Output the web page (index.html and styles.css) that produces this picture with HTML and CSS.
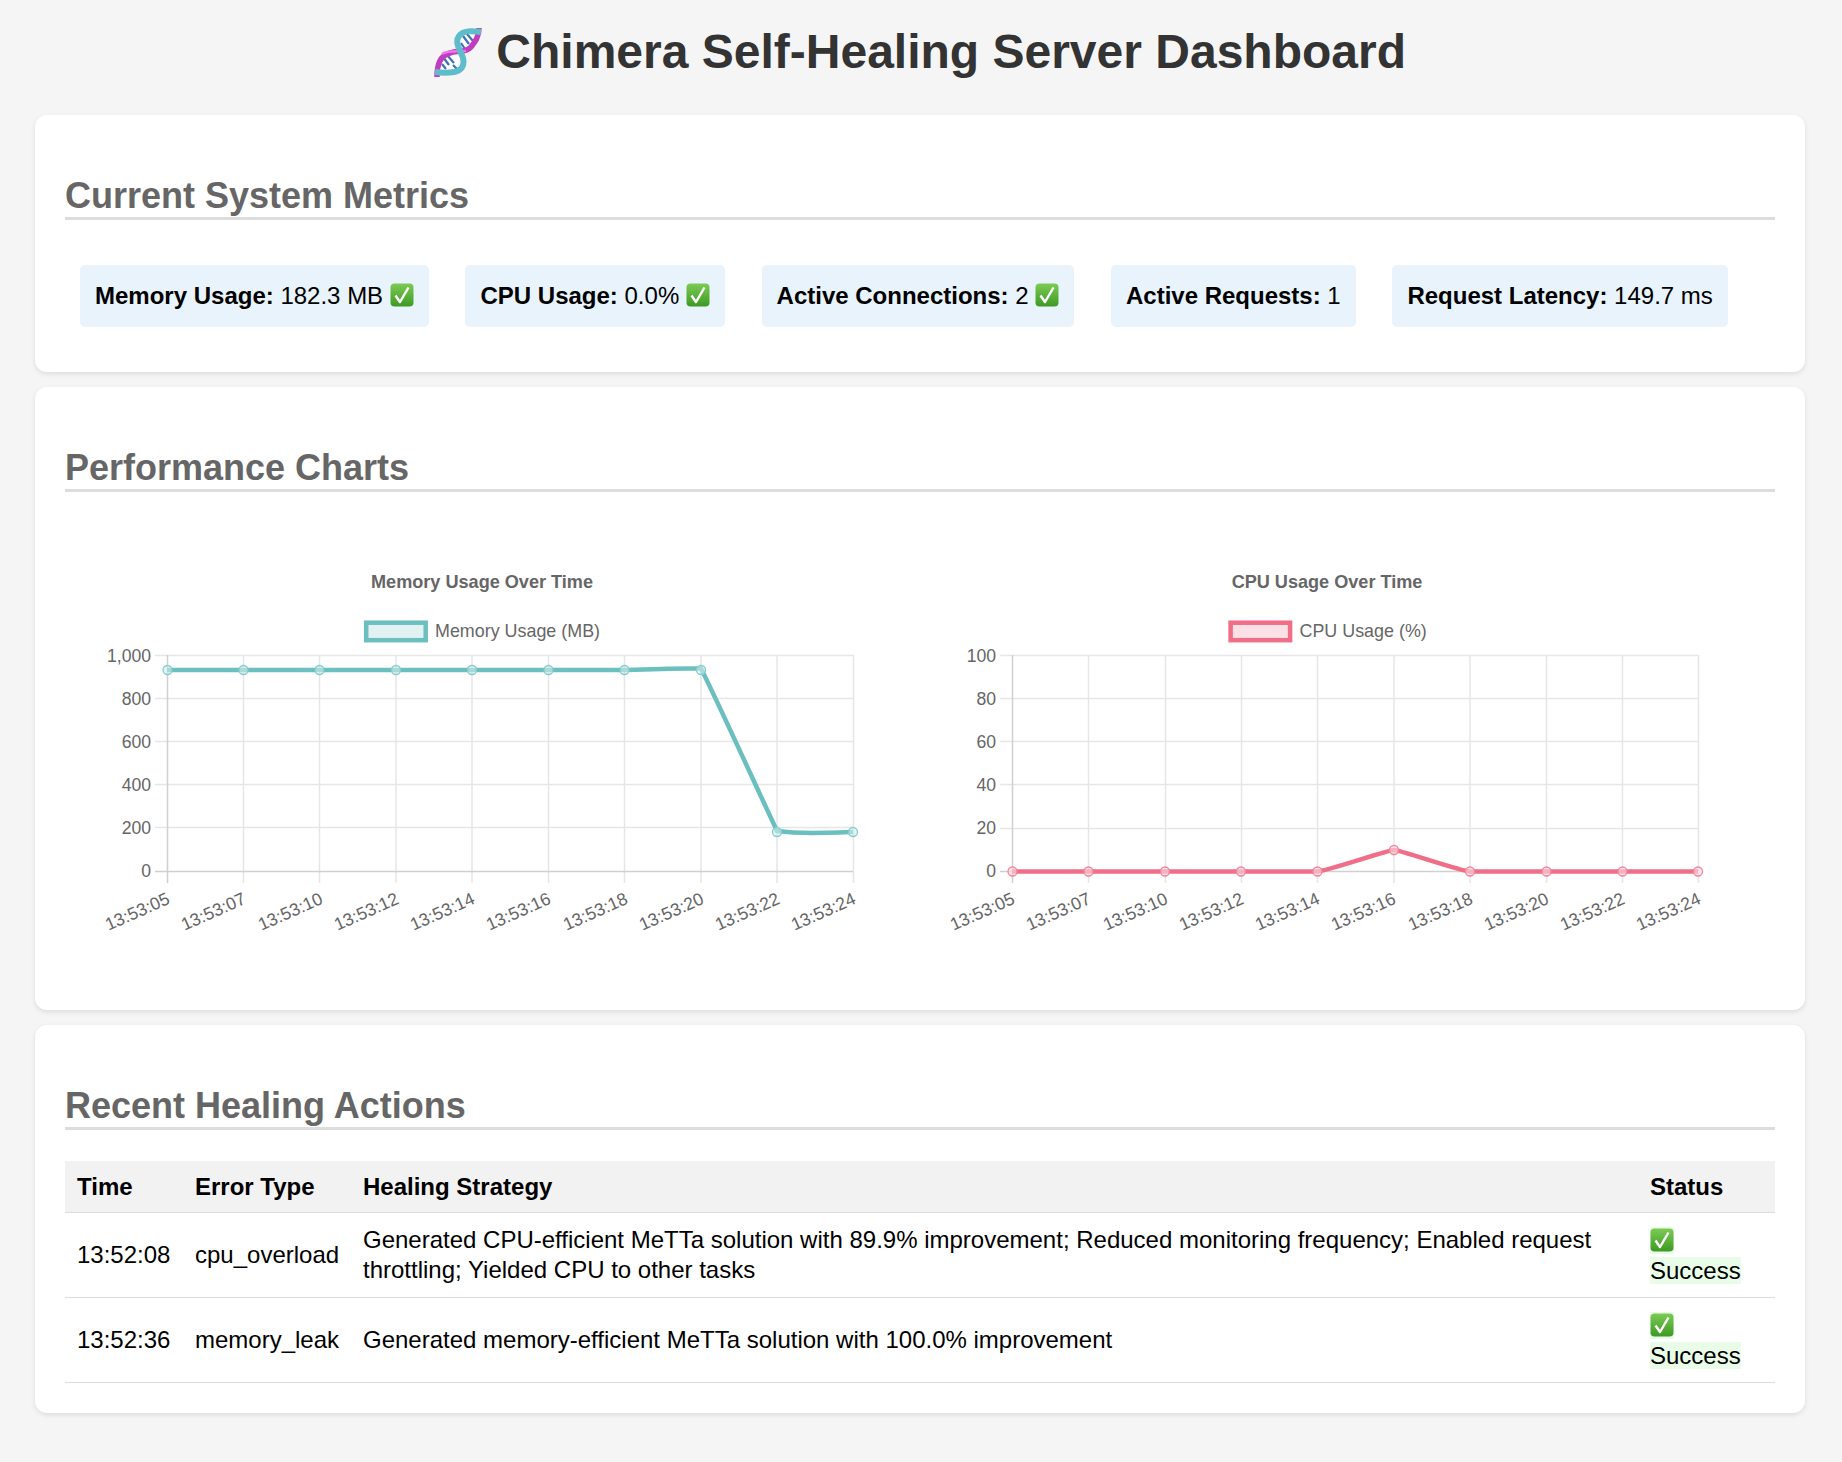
FILE: index.html
```html
<!DOCTYPE html>
<html lang="en">
<head>
    <meta charset="UTF-8">
    <meta name="viewport" content="width=device-width, initial-scale=1.0">
    <title>Chimera Self-Healing Server Dashboard</title>
    <link rel="stylesheet" href="styles.css">
</head>
<body>
    <svg class="defs" width="0" height="0" aria-hidden="true">
        <defs>
            <linearGradient id="checkFill" x1="0" y1="0" x2="0" y2="1">
                <stop offset="0" stop-color="#7ccb55"/>
                <stop offset="1" stop-color="#3d9a23"/>
            </linearGradient>
            <symbol id="check" viewBox="0 0 24 24">
                <rect x="0.5" y="0.5" width="23" height="23" rx="4" fill="url(#checkFill)"/>
                <path d="M5.5 12.5 L10 19 L18.5 4.5" fill="none" stroke="#fff" stroke-width="2.4" stroke-linejoin="round"/>
            </symbol>
        </defs>
    </svg>

    <h1 class="page-title">
        <svg class="dna" viewBox="0 0 48 50" width="48" height="50" aria-hidden="true">
            <!-- white inside of the two lobes, then rungs, then strands -->
            <path d="M26 6 H40 L33 22 H26 Z M6 28 H26 L22 43 H6 Z" fill="#fff"/>
            <path d="M29 8 L35 16 M33 6 L39 13 M27 15 L31 21 M9 29 L15 37 M13 27 L20 35 M8 36 L12 41 M19 37 L23 41" stroke="#3f6fb5" stroke-width="2.2" fill="none"/>
            <path d="M45 0 C45 9 41 14 37 19 C32 25 24 22 16 25 C6 28 3 36 3 49" fill="none" stroke="#c03cc0" stroke-width="5.5"/>
            <path d="M8 26 C14 22 24 24 32 23" fill="none" stroke="#ea78e6" stroke-width="2.5"/>
            <path d="M47 4 C38 3 29 2 25 8 C20 15 27 23 29 30 C31 38 27 43 20 44 C14 45 8 45 1 44" fill="none" stroke="#5fbccb" stroke-width="6"/>
        </svg>
        Chimera Self-Healing Server Dashboard
    </h1>

    <section class="card">
        <h2 class="card-title">Current System Metrics</h2>
        <div class="metrics">
            <div class="metric"><strong>Memory Usage:</strong> 182.3 MB <svg class="check"><use href="#check"/></svg></div>
            <div class="metric"><strong>CPU Usage:</strong> 0.0% <svg class="check"><use href="#check"/></svg></div>
            <div class="metric"><strong>Active Connections:</strong> 2 <svg class="check"><use href="#check"/></svg></div>
            <div class="metric"><strong>Active Requests:</strong> 1</div>
            <div class="metric"><strong>Request Latency:</strong> 149.7 ms</div>
        </div>
    </section>

    <section class="card">
        <h2 class="card-title">Performance Charts</h2>
        <div class="charts">
            <!-- memory chart: plot area is x 102-788, y 115-331 -->
            <svg class="chart" viewBox="0 0 834 440" width="834" height="440">
                <text class="chart-title" x="417" y="48">Memory Usage Over Time</text>
                <rect class="legend-box teal" x="301.2" y="82.7" width="59.5" height="17.5"/>
                <text class="legend-label" x="370" y="97">Memory Usage (MB)</text>

                <g class="grid">
                    <path d="M90 115.5H788 M90 158.5H788 M90 201.5H788 M90 244.5H788 M90 287.5H788"/>
                    <path d="M178.5 115V343 M254.5 115V343 M331 115V343 M407 115V343 M483.5 115V343 M559.5 115V343 M636 115V343 M712 115V343 M788.5 115V343"/>
                </g>
                <path class="axis" d="M102.5 115V343 M90 331.5H788"/>

                <g class="tick-y">
                    <text x="86" y="122">1,000</text>
                    <text x="86" y="165">800</text>
                    <text x="86" y="208">600</text>
                    <text x="86" y="251">400</text>
                    <text x="86" y="294">200</text>
                    <text x="86" y="337">0</text>
                </g>
                <g class="tick-x">
                    <text transform="translate(106 363) rotate(-24)">13:53:05</text>
                    <text transform="translate(182 363) rotate(-24)">13:53:07</text>
                    <text transform="translate(259 363) rotate(-24)">13:53:10</text>
                    <text transform="translate(335 363) rotate(-24)">13:53:12</text>
                    <text transform="translate(411 363) rotate(-24)">13:53:14</text>
                    <text transform="translate(487 363) rotate(-24)">13:53:16</text>
                    <text transform="translate(564 363) rotate(-24)">13:53:18</text>
                    <text transform="translate(640 363) rotate(-24)">13:53:20</text>
                    <text transform="translate(716 363) rotate(-24)">13:53:22</text>
                    <text transform="translate(792 363) rotate(-24)">13:53:24</text>
                </g>

                <path class="line teal" d="M102 130 H559.5 C585 129 610 128 636 128.5 C652 160 695 255 712 291 C735 294 760 293 788 292"/>
                <g class="point teal">
                    <circle cx="102.5" cy="130" r="4.5"/><circle cx="178.5" cy="130" r="4.5"/>
                    <circle cx="254.5" cy="130" r="4.5"/><circle cx="331" cy="130" r="4.5"/>
                    <circle cx="407" cy="130" r="4.5"/><circle cx="483.5" cy="130" r="4.5"/>
                    <circle cx="559.5" cy="130" r="4.5"/><circle cx="636" cy="130" r="4.5"/>
                    <circle cx="712" cy="292" r="4.5"/><circle cx="788" cy="292" r="4.5"/>
                </g>
            </svg>

            <!-- cpu chart: plot area is x 102-788, y 115-331 -->
            <svg class="chart" viewBox="0 0 834 440" width="834" height="440">
                <text class="chart-title" x="417" y="48">CPU Usage Over Time</text>
                <rect class="legend-box pink" x="320.6" y="82.7" width="59.5" height="17.5"/>
                <text class="legend-label" x="389.5" y="97">CPU Usage (%)</text>

                <g class="grid">
                    <path d="M90 115.5H788 M90 158.5H788 M90 201.5H788 M90 244.5H788 M90 288.5H788"/>
                    <path d="M178.5 115V343 M255.5 115V343 M331.5 115V343 M407.5 115V343 M484 115V343 M560 115V343 M636.5 115V343 M712.5 115V343 M788.5 115V343"/>
                </g>
                <path class="axis" d="M102.5 115V343 M90 331.5H788"/>

                <g class="tick-y">
                    <text x="86" y="122">100</text>
                    <text x="86" y="165">80</text>
                    <text x="86" y="208">60</text>
                    <text x="86" y="251">40</text>
                    <text x="86" y="294">20</text>
                    <text x="86" y="337">0</text>
                </g>
                <g class="tick-x">
                    <text transform="translate(106 363) rotate(-24)">13:53:05</text>
                    <text transform="translate(182 363) rotate(-24)">13:53:07</text>
                    <text transform="translate(259 363) rotate(-24)">13:53:10</text>
                    <text transform="translate(335 363) rotate(-24)">13:53:12</text>
                    <text transform="translate(411 363) rotate(-24)">13:53:14</text>
                    <text transform="translate(487 363) rotate(-24)">13:53:16</text>
                    <text transform="translate(564 363) rotate(-24)">13:53:18</text>
                    <text transform="translate(640 363) rotate(-24)">13:53:20</text>
                    <text transform="translate(716 363) rotate(-24)">13:53:22</text>
                    <text transform="translate(792 363) rotate(-24)">13:53:24</text>
                </g>

                <path class="line pink" d="M102 331.5 H407.5 C415 331.5 478 310 484 310 C490 310 552 331.5 560 331.5 H788"/>
                <g class="point pink">
                    <circle cx="102.5" cy="331.5" r="4.5"/><circle cx="178.5" cy="331.5" r="4.5"/>
                    <circle cx="255" cy="331.5" r="4.5"/><circle cx="331" cy="331.5" r="4.5"/>
                    <circle cx="407.5" cy="331.5" r="4.5"/><circle cx="484" cy="310" r="4.5"/>
                    <circle cx="560" cy="331.5" r="4.5"/><circle cx="636.5" cy="331.5" r="4.5"/>
                    <circle cx="712.5" cy="331.5" r="4.5"/><circle cx="788" cy="331.5" r="4.5"/>
                </g>
            </svg>
        </div>
    </section>

    <section class="card">
        <h2 class="card-title">Recent Healing Actions</h2>
        <table class="actions">
            <colgroup>
                <col class="col-time">
                <col class="col-type">
                <col>
                <col class="col-status">
            </colgroup>
            <thead>
                <tr>
                    <th>Time</th>
                    <th>Error Type</th>
                    <th>Healing Strategy</th>
                    <th>Status</th>
                </tr>
            </thead>
            <tbody>
                <tr>
                    <td>13:52:08</td>
                    <td>cpu_overload</td>
                    <td>Generated CPU-efficient MeTTa solution with 89.9% improvement; Reduced monitoring frequency; Enabled request throttling; Yielded CPU to other tasks</td>
                    <td class="status-cell"><span class="success"><svg class="check"><use href="#check"/></svg> Success</span></td>
                </tr>
                <tr>
                    <td>13:52:36</td>
                    <td>memory_leak</td>
                    <td>Generated memory-efficient MeTTa solution with 100.0% improvement</td>
                    <td class="status-cell"><span class="success"><svg class="check"><use href="#check"/></svg> Success</span></td>
                </tr>
            </tbody>
        </table>
    </section>
</body>
</html>
```

FILE: styles.css
```css
body {
    font-family: "Liberation Sans", Arial, sans-serif;
    font-size: 24px;
    margin: 0;
    padding: 0 37px 0 35px;
    background-color: #f5f5f5;
    color: #000;
}
.defs {
    position: absolute;
}
.page-title {
    font-size: 48px;
    line-height: 55px;
    color: #333;
    text-align: center;
    margin: 0;
    padding: 24px 0 36px;
}
.dna {
    vertical-align: -9px;
    margin-right: 1px;
    margin-bottom: -1px;
}
.card {
    background-color: #fff;
    border-radius: 12px;
    padding: 30px;
    margin-bottom: 15px;
    box-shadow: 0 2px 5px rgba(0, 0, 0, 0.1);
}
.card-title {
    font-size: 36px;
    line-height: 41px;
    color: #666;
    margin: 30px 0 0;
    padding-bottom: 1px;
    border-bottom: 3px solid #ddd;
}
.metrics {
    padding-top: 30px;
}
.metric {
    display: inline-block;
    margin: 15px;
    padding: 15px;
    line-height: 32px;
    background-color: #e8f3fc;
    border-radius: 5px;
}
.check {
    width: 24px;
    height: 24px;
    vertical-align: -3px;
}
.charts {
    display: flex;
    gap: 11px;
    padding-top: 48px;
}
.chart {
    flex: none;
    display: block;
}
.chart text {
    font-family: "Liberation Sans", Arial, sans-serif;
    font-size: 17.6px;
    fill: #666;
}
.chart .chart-title {
    font-size: 18.1px;
    font-weight: bold;
    text-anchor: middle;
}
.chart .legend-label {
    font-size: 17.9px;
}
.tick-y text {
    text-anchor: end;
}
.tick-x text {
    text-anchor: end;
}
.grid path {
    fill: none;
    stroke: #e6e6e6;
    stroke-width: 1.5;
}
.axis {
    fill: none;
    stroke: #d0d0d0;
    stroke-width: 1.5;
}
.line {
    fill: none;
    stroke-width: 4.5;
}
.line.teal {
    stroke: #6cbfbf;
}
.line.pink {
    stroke: #f06e88;
}
.point circle {
    stroke-width: 1.3;
}
.point.teal circle {
    fill: rgba(210, 236, 236, 0.6);
    stroke: #86cccc;
}
.point.pink circle {
    fill: rgba(252, 220, 228, 0.6);
    stroke: #f4849a;
}
.legend-box {
    stroke-width: 4.5;
}
.legend-box.teal {
    fill: #e2f2f2;
    stroke: #6cbfbf;
}
.legend-box.pink {
    fill: #fbe0e6;
    stroke: #f06e88;
}
.actions {
    width: 100%;
    table-layout: fixed;
    border-collapse: collapse;
    margin-top: 31px;
}
.col-time {
    width: 118px;
}
.col-type {
    width: 168px;
}
.col-status {
    width: 137px;
}
.actions th {
    text-align: left;
    line-height: 27px;
    padding: 12px;
    background-color: #f2f2f2;
    border-bottom: 1px solid #ddd;
}
.actions td {
    line-height: 30px;
    padding: 12px;
    border-bottom: 1px solid #ddd;
}
.actions .status-cell {
    padding-top: 13px;
    padding-bottom: 11px;
}
.success {
    background-color: #e8fce8;
}
```
